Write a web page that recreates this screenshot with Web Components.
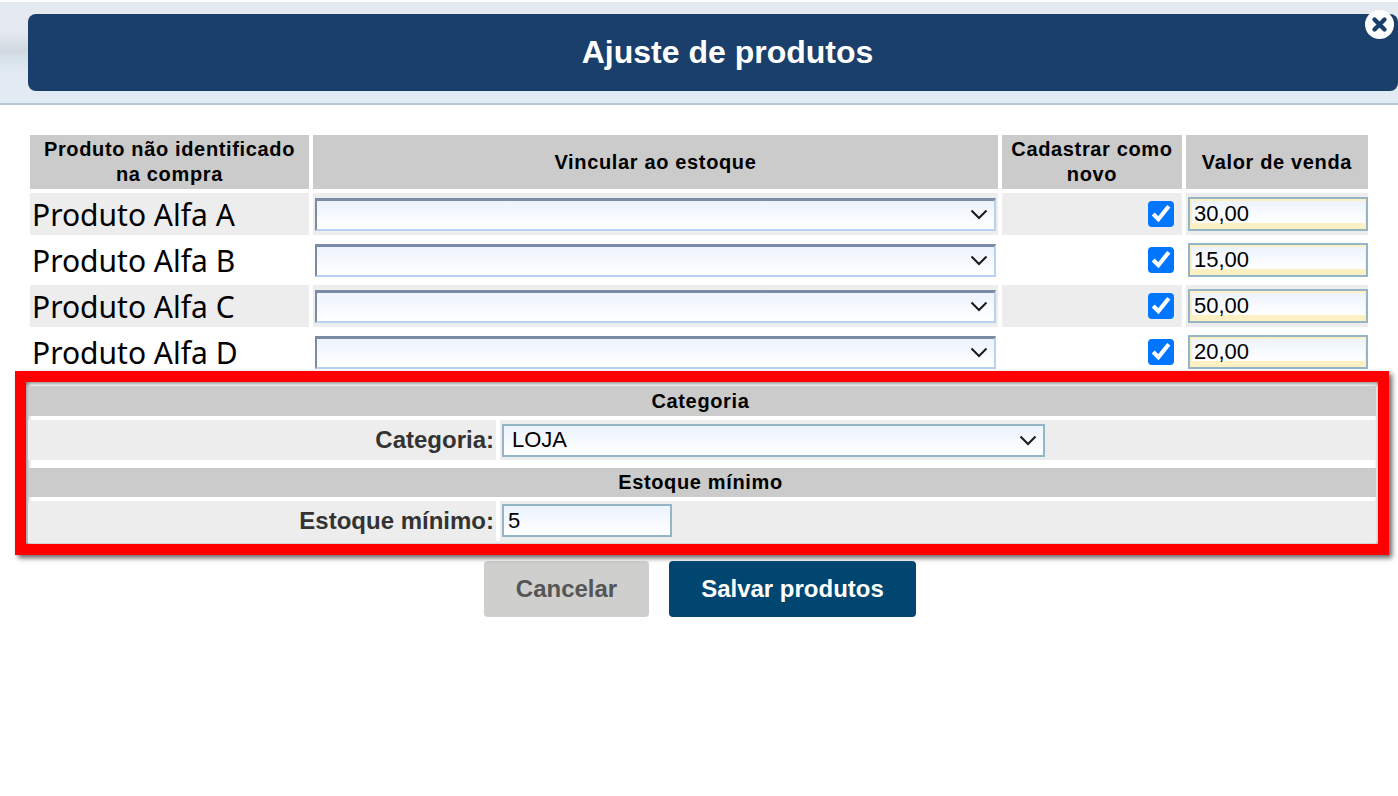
<!DOCTYPE html>
<html lang="pt">
<head>
<meta charset="utf-8">
<title>Ajuste de produtos</title>
<style>
  html, body { margin: 0; background: #fff; font-family: "Liberation Sans", Arial, sans-serif; }
</style>
</head>
<body>
<modal-header>Ajuste de produtos</modal-header>

<product-table>
  <table-head><span>Produto não identificado<br>na compra</span></table-head>
  <table-head>Vincular ao estoque</table-head>
  <table-head><span>Cadastrar como<br>novo</span></table-head>
  <table-head>Valor de venda</table-head>
  <product-row name="Produto Alfa A" value="30,00" shaded></product-row>
  <product-row name="Produto Alfa B" value="15,00"></product-row>
  <product-row name="Produto Alfa C" value="50,00" shaded></product-row>
  <product-row name="Produto Alfa D" value="20,00"></product-row>
</product-table>

<highlight-box>
  <section-title>Categoria</section-title>
  <form-row label="Categoria:">
    <select-box plain>LOJA</select-box>
  </form-row>
  <section-title class="second">Estoque mínimo</section-title>
  <form-row label="Estoque mínimo:" tall>
    <text-field plain>5</text-field>
  </form-row>
</highlight-box>

<action-bar>
  <action-button>Cancelar</action-button>
  <action-button primary>Salvar produtos</action-button>
</action-bar>

<script>
class ModalHeader extends HTMLElement {
  constructor() {
    super();
    this.attachShadow({ mode: "open" });
    this.shadowRoot.innerHTML = `
      <style>
        :host {
          display: block;
          position: relative;
          margin-top: 2px;
          height: 103px;
          padding: 12px 0 0 28px;
          box-sizing: border-box;
          border-bottom: 2px solid #b5c6d6;
          background: linear-gradient(#e5e9f0 0, #e5e9f0 30px, #d0d9e0 49px, #d8e2ea 56px, #e2ebf4 72px);
        }
        h1 {
          margin: 0;
          height: 77px;
          padding-left: 29px;
          display: flex;
          align-items: center;
          justify-content: center;
          background: #1a3f6b;
          border-radius: 8px;
          color: #fff;
          font: bold 32px "Liberation Sans", Arial, sans-serif;
        }
        button {
          position: absolute;
          top: 8px;
          right: 4px;
          width: 29px;
          height: 29px;
          padding: 0;
          border: 0;
          border-radius: 50%;
          background: #fff;
          display: flex;
          align-items: center;
          justify-content: center;
        }
      </style>
      <h1><slot></slot></h1>
      <button aria-label="Fechar">
        <svg width="17" height="17" viewBox="0 0 17 17">
          <path d="M3.5 3.5 13.5 13.5M13.5 3.5 3.5 13.5" stroke="#1a3f6b" stroke-width="4.4" stroke-linecap="round"/>
        </svg>
      </button>
    `;
  }
}

class ProductTable extends HTMLElement {
  constructor() {
    super();
    this.attachShadow({ mode: "open" });
    this.shadowRoot.innerHTML = `
      <style>
        :host {
          display: grid;
          grid-template-columns: 279px 685px 180px 182px;
          grid-auto-rows: 42px;
          grid-template-rows: 54px;
          gap: 4px;
          margin: 30px 0 0 30px;
        }
      </style>
      <slot></slot>
    `;
  }
}

class TableHead extends HTMLElement {
  constructor() {
    super();
    this.attachShadow({ mode: "open" });
    this.shadowRoot.innerHTML = `
      <style>
        :host {
          display: flex;
          align-items: center;
          justify-content: center;
          text-align: center;
          background: #cbcbcb;
          color: #000;
          font: bold 20px/25px "Liberation Sans", Arial, sans-serif;
          letter-spacing: 0.65px;
        }
      </style>
      <slot></slot>
    `;
  }
}

class ProductRow extends HTMLElement {
  constructor() {
    super();
    this.attachShadow({ mode: "open" });
    const name = this.getAttribute("name");
    const value = this.getAttribute("value");
    this.shadowRoot.innerHTML = `
      <style>
        :host {
          display: grid;
          grid-column: 1 / -1;
          grid-template-columns: subgrid;
        }
        .cell {
          display: flex;
          align-items: center;
          height: 42px;
        }
        :host([shaded]) .cell { background: #ededed; }
        .name {
          padding-left: 2px;
          color: #000;
          font: 30px "Noto Sans", sans-serif;
        }
        .pick { padding: 0 2px; }
        .check { justify-content: flex-end; padding-right: 8px; }
        .check input { zoom: 2; margin: 0; }
        .price { padding-left: 2px; }
      </style>
      <div class="cell name">${name}</div>
      <div class="cell pick"><select-box></select-box></div>
      <div class="cell check"><input type="checkbox" checked></div>
      <div class="cell price"><text-field>${value}</text-field></div>
    `;
  }
}

class SelectBox extends HTMLElement {
  constructor() {
    super();
    this.attachShadow({ mode: "open" });
    this.shadowRoot.innerHTML = `
      <style>
        :host {
          display: flex;
          align-items: center;
          box-sizing: border-box;
          width: 681px;
          height: 33px;
          padding: 0 6px 0 0;
          border: solid #b9d2f2;
          border-width: 3px 2px 2px 2px;
          border-top-color: #7b8ba6;
          border-left-color: #7b8ba6;
          background: linear-gradient(#edf3fd, #fff);
          color: #000;
          font: 22px "Liberation Sans", Arial, sans-serif;
        }
        :host([plain]) {
          width: 543px;
          border: 2px solid #93b5c5;
          padding-left: 8px;
        }
        svg { flex: none; margin-left: auto; }
      </style>
      <slot></slot>
      <svg width="18" height="11" viewBox="0 0 18 11">
        <path d="M1.5 1.5 9 9l7.5-7.5" fill="none" stroke="#1a1a1a" stroke-width="2"/>
      </svg>
    `;
  }
}

class TextField extends HTMLElement {
  constructor() {
    super();
    this.attachShadow({ mode: "open" });
    this.shadowRoot.innerHTML = `
      <style>
        :host {
          display: flex;
          align-items: center;
          box-sizing: border-box;
          width: 180px;
          height: 34px;
          padding: 0 0 1px 4px;
          border: 2px solid #93b5c5;
          background: linear-gradient(#edf3fd, #fff) 2px 2px / calc(100% - 3px) 22px no-repeat, #fdf0c3;
          color: #000;
          font: 22px "Liberation Sans", Arial, sans-serif;
        }
        :host([plain]) {
          width: 170px;
          height: 33px;
          padding: 0 0 0 4px;
          background: linear-gradient(#edf3fd, #fff);
        }
      </style>
      <slot></slot>
    `;
  }
}

class HighlightBox extends HTMLElement {
  constructor() {
    super();
    this.attachShadow({ mode: "open" });
    this.shadowRoot.innerHTML = `
      <style>
        :host {
          display: grid;
          grid-template-columns: 468px 876px;
          column-gap: 4px;
          align-content: start;
          box-sizing: border-box;
          width: 1374px;
          height: 184px;
          margin: -2px 0 0 15px;
          padding: 4px 2px 0;
          border: 11px solid #f00;
          background: #fff;
          position: relative;
          box-shadow: 3px 3px 5px #666, inset 1px 1px 5px #666;
        }
      </style>
      <slot></slot>
    `;
  }
}

class SectionTitle extends HTMLElement {
  constructor() {
    super();
    this.attachShadow({ mode: "open" });
    this.shadowRoot.innerHTML = `
      <style>
        :host {
          display: flex;
          grid-column: 1 / -1;
          align-items: center;
          justify-content: center;
          height: 30px;
          padding-right: 3px;
          background: #cbcbcb;
          color: #000;
          font: bold 20px "Liberation Sans", Arial, sans-serif;
          letter-spacing: 0.65px;
        }
        :host(.second) { height: 29px; margin-top: 8px; }
      </style>
      <slot></slot>
    `;
  }
}

class FormRow extends HTMLElement {
  constructor() {
    super();
    this.attachShadow({ mode: "open" });
    const label = this.getAttribute("label");
    this.shadowRoot.innerHTML = `
      <style>
        :host {
          display: grid;
          grid-column: 1 / -1;
          grid-template-columns: subgrid;
          margin-top: 4px;
        }
        .cell {
          display: flex;
          align-items: center;
          box-sizing: border-box;
          background: #ededed;
          height: 40px;
        }
        :host([tall]) .cell { height: 42px; padding-bottom: 3px; }
        .label {
          justify-content: flex-end;
          padding-right: 2px;
          color: #333;
          font: bold 24px "Liberation Sans", Arial, sans-serif;
        }
        .field { padding-left: 2px; }
      </style>
      <div class="cell label">${label}</div>
      <div class="cell field"><slot></slot></div>
    `;
  }
}

class ActionBar extends HTMLElement {
  constructor() {
    super();
    this.attachShadow({ mode: "open" });
    this.shadowRoot.innerHTML = `
      <style>
        :host {
          display: flex;
          justify-content: center;
          gap: 20px;
          margin-top: 6px;
          padding-left: 2px;
        }
      </style>
      <slot></slot>
    `;
  }
}

class ActionButton extends HTMLElement {
  constructor() {
    super();
    this.attachShadow({ mode: "open" });
    this.shadowRoot.innerHTML = `
      <style>
        :host {
          display: flex;
          align-items: center;
          justify-content: center;
          box-sizing: border-box;
          width: 165px;
          height: 56px;
          border-radius: 4px;
          background: #cfcfcd;
          color: #555;
          font: bold 24px "Liberation Sans", Arial, sans-serif;
        }
        :host([primary]) {
          width: 247px;
          background: #004670;
          color: #fff;
        }
      </style>
      <slot></slot>
    `;
  }
}

customElements.define("modal-header", ModalHeader);
customElements.define("product-table", ProductTable);
customElements.define("table-head", TableHead);
customElements.define("product-row", ProductRow);
customElements.define("select-box", SelectBox);
customElements.define("text-field", TextField);
customElements.define("highlight-box", HighlightBox);
customElements.define("section-title", SectionTitle);
customElements.define("form-row", FormRow);
customElements.define("action-bar", ActionBar);
customElements.define("action-button", ActionButton);
</script>
</body>
</html>
